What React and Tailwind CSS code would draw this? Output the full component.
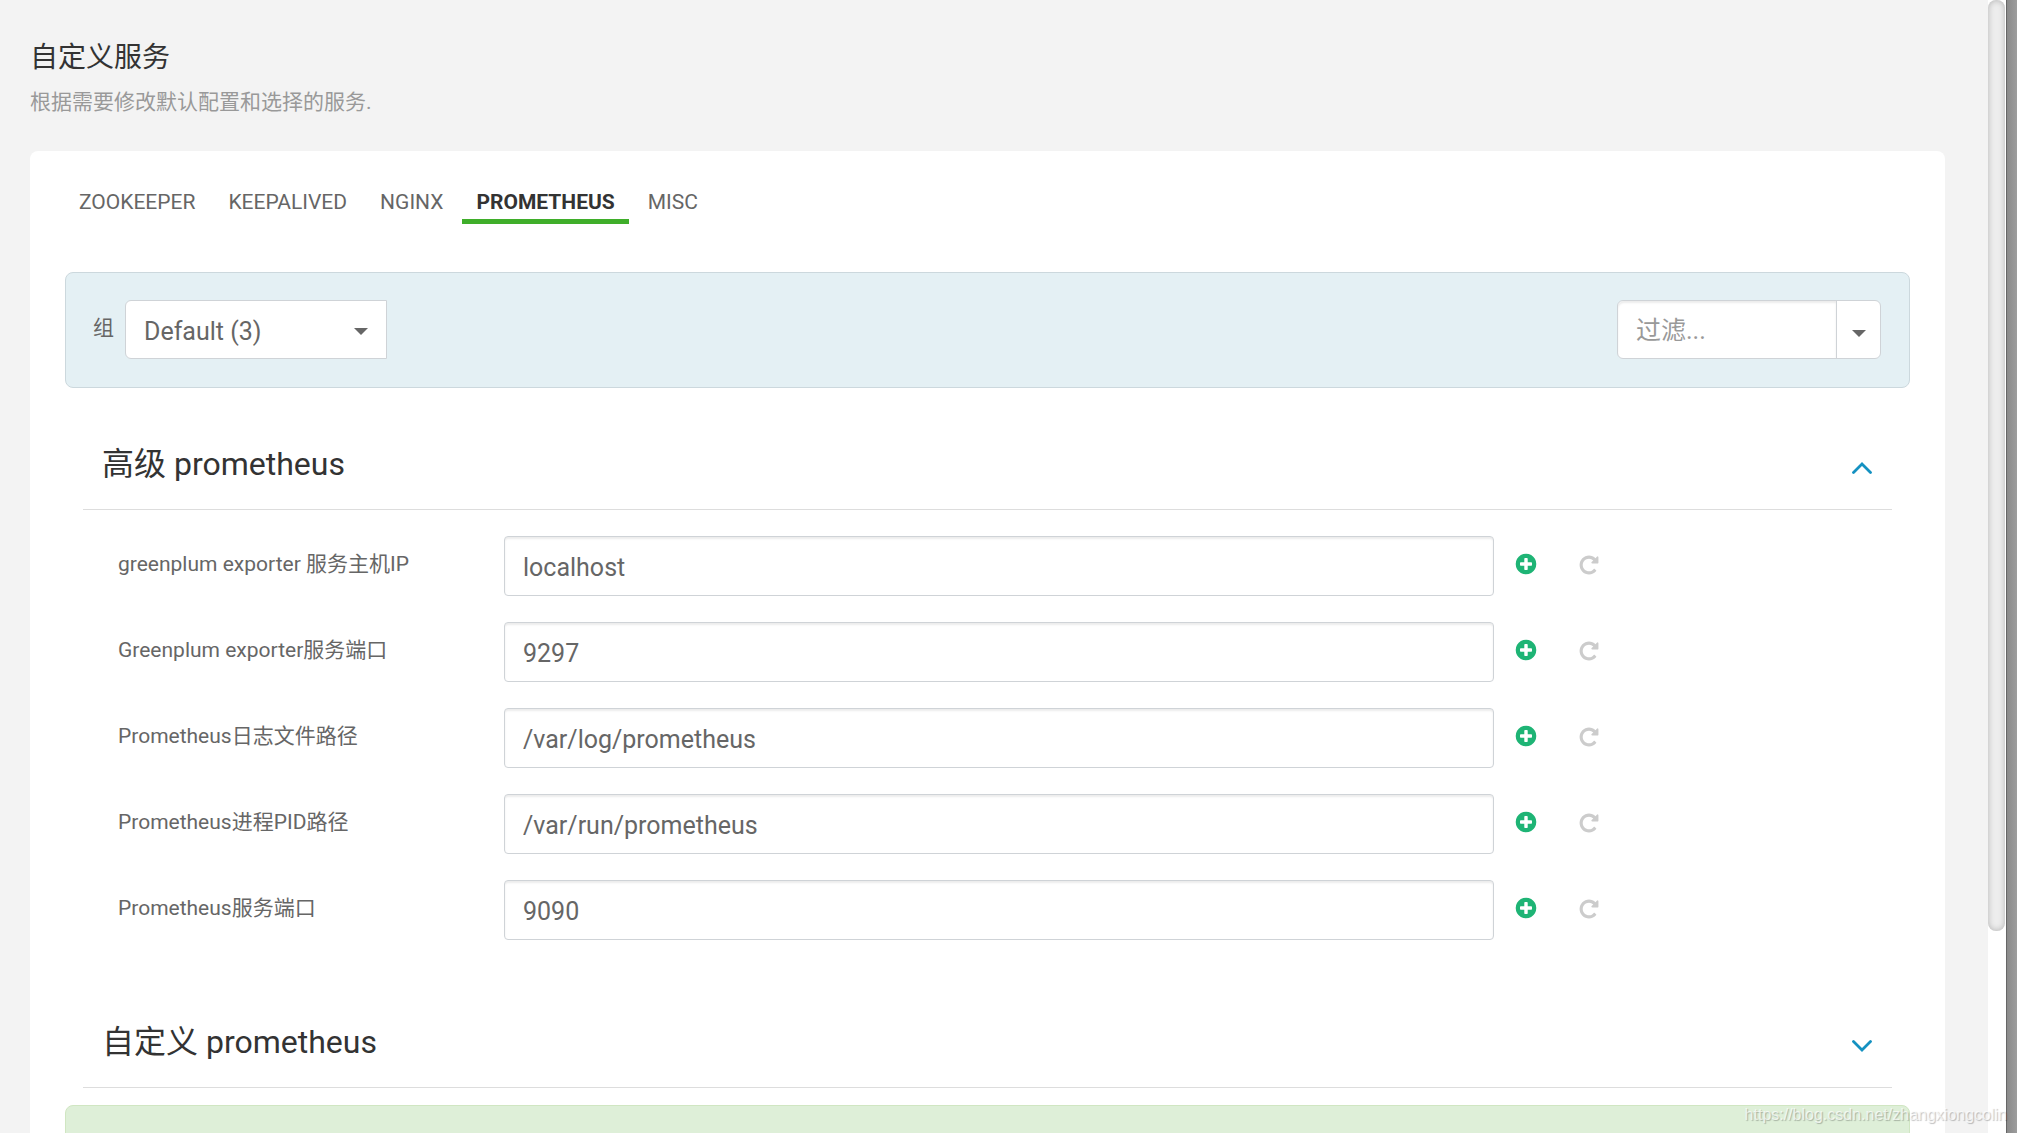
import React, { useState } from 'react';

const tabs = ['ZOOKEEPER', 'KEEPALIVED', 'NGINX', 'PROMETHEUS', 'MISC'];

const properties = [
  { id: 'exporter-host', label: 'greenplum exporter 服务主机IP', value: 'localhost' },
  { id: 'exporter-port', label: 'Greenplum exporter服务端口', value: '9297' },
  { id: 'log-dir', label: 'Prometheus日志文件路径', value: '/var/log/prometheus' },
  { id: 'pid-dir', label: 'Prometheus进程PID路径', value: '/var/run/prometheus' },
  { id: 'port', label: 'Prometheus服务端口', value: '9090' },
];

const Caret = ({ className }) => (
  <svg viewBox="0 0 14 7" className={`h-[7px] w-[14px] ${className || ''}`} fill="currentColor" aria-hidden="true">
    <path d="M0 0h14L7 7z" />
  </svg>
);

const PlusIcon = () => (
  <svg viewBox="0 0 1792 1792" className="size-6" fill="currentColor" aria-hidden="true">
    <path d="M1344 960v-128q0-26-19-45t-45-19h-256v-256q0-26-19-45t-45-19h-128q-26 0-45 19t-19 45v256h-256q-26 0-45 19t-19 45v128q0 26 19 45t45 19h256v256q0 26 19 45t45 19h128q26 0 45-19t19-45v-256h256q26 0 45-19t19-45zm320-64q0 209-103 385.5t-279.5 279.5-385.5 103-385.5-103-279.5-279.5-103-385.5 103-385.5 279.5-279.5 385.5-103 385.5 103 279.5 279.5 103 385.5z" />
  </svg>
);

const ResetIcon = () => (
  <svg viewBox="0 0 1792 1792" className="size-[22px]" fill="currentColor" aria-hidden="true">
    <path d="M1664 256v448q0 26-19 45t-45 19h-448q-42 0-59-40-17-39 14-69l138-138q-148-137-349-137-104 0-198.5 40.5t-163.5 109.5-109.5 163.5-40.5 198.5 40.5 198.5 109.5 163.5 163.5 109.5 198.5 40.5q119 0 225-52t179-147q7-10 23-12 15 0 25 9l137 138q9 8 9.5 20.5t-7.5 22.5q-109 132-264 204.5t-327 72.5q-156 0-298-61t-245-164-164-245-61-298 61-298 164-245 245-164 298-61q147 0 284.5 55.5t244.5 156.5l130-129q29-31 70-14 39 17 39 59z" />
  </svg>
);

const Section = ({ title, open, onToggle, children }) => (
  <section className="px-[18px]">
    <h2 className="border-b border-[#ddd]">
      <button
        type="button"
        aria-expanded={open}
        onClick={onToggle}
        className="flex h-[92px] w-full items-center justify-between pt-0.5 pr-5 pl-[19px] text-[32px] text-[#333]"
      >
        {title}
        <svg viewBox="0 0 20 12" className="mt-2 h-3 w-5 text-[#1491c1]" fill="none" stroke="currentColor" strokeWidth="2.8" strokeLinecap="round" aria-hidden="true">
          <path d={open ? 'M1.5 10.5 10 2l8.5 8.5' : 'M1.5 1.5 10 10l8.5-8.5'} />
        </svg>
      </button>
    </h2>
    {children}
  </section>
);

const PropertyRow = ({ property, value, onChange, onReset }) => (
  <div className="flex h-[60px] items-center">
    <label htmlFor={property.id} className="w-[386px] shrink-0 pb-0.5 text-[21px]">
      {property.label}
    </label>
    <input
      id={property.id}
      type="text"
      value={value}
      onChange={(e) => onChange(e.target.value)}
      className="h-[60px] w-[55.8%] rounded border border-[#cfd3d7] bg-white px-[18px] pt-0.5 text-[25px] shadow-[inset_0_2px_2px_rgba(0,0,0,0.08)] outline-none"
    />
    <button type="button" aria-label="Override" className="ml-5 pb-1 text-[#1eb475]">
      <PlusIcon />
    </button>
    <button type="button" aria-label="Reset" onClick={onReset} className="ml-10 pb-0.5 text-[#ccc]">
      <ResetIcon />
    </button>
  </div>
);

const App = () => {
  const [activeTab, setActiveTab] = useState('PROMETHEUS');
  const [advancedOpen, setAdvancedOpen] = useState(true);
  const [customOpen, setCustomOpen] = useState(false);
  const [filter, setFilter] = useState('');
  const [values, setValues] = useState(() => Object.fromEntries(properties.map((p) => [p.id, p.value])));

  const setValue = (id, value) => setValues((prev) => ({ ...prev, [id]: value }));

  return (
    <div className="relative flex h-screen overflow-hidden bg-[#f3f3f3] font-['Roboto','Noto_Sans_CJK_SC',sans-serif] text-[#666]">
      <main className="min-w-0 flex-1 overflow-hidden pr-[43px] pl-[30px]">
        <header className="pt-[38px]">
          <h1 className="text-[28px] leading-10 text-[#333]">自定义服务</h1>
          <p className="mt-1.5 text-[21px] leading-9 text-[#999]">根据需要修改默认配置和选择的服务.</p>
        </header>

        <div className="mt-[31px] rounded-lg bg-white px-[35px] pt-7">
          {/* Service tabs */}
          <nav className="flex gap-[5px]" role="tablist">
            {tabs.map((tab) => (
              <button
                key={tab}
                type="button"
                role="tab"
                aria-selected={activeTab === tab}
                onClick={() => setActiveTab(tab)}
                className={`h-[45px] border-b-5 px-[14px] pt-2 text-[21px] ${activeTab === tab
                  ? 'border-[#3fae2a] font-bold text-[#333]'
                  : 'border-transparent'
                  }`}
              >
                {tab}
              </button>
            ))}
          </nav>

          {/* Config group and filter */}
          <div className="mt-12 flex items-center justify-between rounded-lg border border-[#ccd8dd] bg-[#e4f0f4] pt-[27px] pr-7 pb-7 pl-[27px]">
            <div className="flex items-center">
              <label htmlFor="config-group" className="w-8 pb-0.5 text-[21px]">组</label>
              <div className="relative">
                <select
                  id="config-group"
                  className="h-[59px] w-[262px] appearance-none rounded-l-md border border-[#cfd3d7] bg-white px-[18px] pt-1 text-[25px] outline-none"
                >
                  <option>Default (3)</option>
                </select>
                <Caret className="pointer-events-none absolute top-7 right-[19px]" />
              </div>
            </div>
            <div className="flex h-[59px] rounded-md border border-[#cfd3d7] bg-white">
              <input
                type="text"
                aria-label="过滤"
                placeholder="过滤..."
                value={filter}
                onChange={(e) => setFilter(e.target.value)}
                className="w-[218px] rounded-l-md px-[18px] pt-0.5 text-[25px] shadow-[inset_0_2px_2px_rgba(0,0,0,0.08)] outline-none placeholder:text-[#999]"
              />
              <button type="button" aria-label="Filter options" className="flex w-11 items-center justify-center border-l border-[#cfd3d7] pt-2">
                <Caret />
              </button>
            </div>
          </div>

          <div className="mt-[29px]">
            <Section title="高级 prometheus" open={advancedOpen} onToggle={() => setAdvancedOpen(!advancedOpen)}>
              {advancedOpen && (
                <div className="flex flex-col gap-[26px] pt-[26px] pb-[55px] pl-[35px]">
                  {properties.map((property) => (
                    <PropertyRow
                      key={property.id}
                      property={property}
                      value={values[property.id]}
                      onChange={(value) => setValue(property.id, value)}
                      onReset={() => setValue(property.id, property.value)}
                    />
                  ))}
                </div>
              )}
            </Section>
            <Section title="自定义 prometheus" open={customOpen} onToggle={() => setCustomOpen(!customOpen)} />
          </div>

          <div className="mt-[17px] h-24 rounded-lg border border-[#d0e6c2] bg-[#deefd8]" />
        </div>
      </main>

      {/* Scrollbar and window edge */}
      <div className="w-[18px] shrink-0 bg-white pr-px">
        <div className="h-[931px] rounded-lg bg-[#ededed] shadow-[inset_0_0_6px_rgba(0,0,0,0.25)]" />
      </div>
      <div className="w-[11px] shrink-0 border-l border-[#666] bg-linear-to-r from-[#8a8a8a] to-[#9d9d9d]" />

      <div className="absolute right-[10px] bottom-1.5 text-[16px] leading-6 font-['Liberation_Sans',sans-serif] text-white/70 [text-shadow:1px_1px_1px_rgba(0,0,0,0.25)]">
        https://blog.csdn.net/zhangxiongcolin
      </div>
    </div>
  );
};

export default App;
